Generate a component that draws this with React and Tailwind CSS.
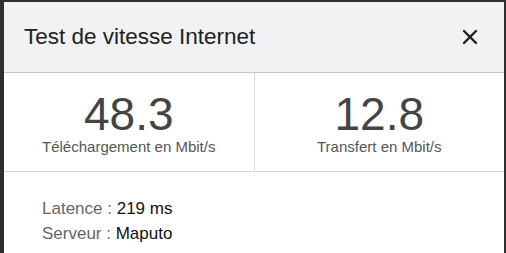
import { X } from "lucide-react";

const Stat = ({ value, label, border }) => (
  <div
    className={`flex-1 flex flex-col items-center pt-[18px] ${
      border ? "border-r border-[#d9d9d9]" : ""
    }`}
  >
    <span className="text-[46px] leading-[46px] text-[#444]">{value}</span>
    <span className="mt-[1px] text-[15px] leading-[18px] text-[#555]">{label}</span>
  </div>
);

export default function App() {
  return (
    <div className="h-[253px] w-[506px] overflow-hidden bg-[#2f2f2f] pt-[2px] pl-[4px] pr-[2px] font-['Liberation_Sans',Arial,sans-serif]">
      <div className="h-[300px] bg-white">
        {/* Header */}
        <div className="flex h-[71px] items-center justify-between border-b border-[#c8c8c8] bg-[#f1f2f4] pl-[20px] pr-[22px]">
          <h1 className="text-[22.5px] leading-none text-[#222]">
            Test de vitesse Internet
          </h1>
          <X size={24} strokeWidth={2.4} className="text-[#222]" />
        </div>

        {/* Speeds */}
        <div className="flex h-[99px] border-b border-[#d9d9d9]">
          <Stat value="48.3" label="Téléchargement en Mbit/s" border />
          <Stat value="12.8" label="Transfert en Mbit/s" />
        </div>

        {/* Details */}
        <div className="pl-[38px] pt-[24px] text-[17px] leading-[25px]">
          <p>
            <span className="text-[#666]">Latence : </span>
            <span className="text-[#111]">219 ms</span>
          </p>
          <p>
            <span className="text-[#666]">Serveur : </span>
            <span className="text-[#111]">Maputo</span>
          </p>
        </div>
      </div>
    </div>
  );
}
